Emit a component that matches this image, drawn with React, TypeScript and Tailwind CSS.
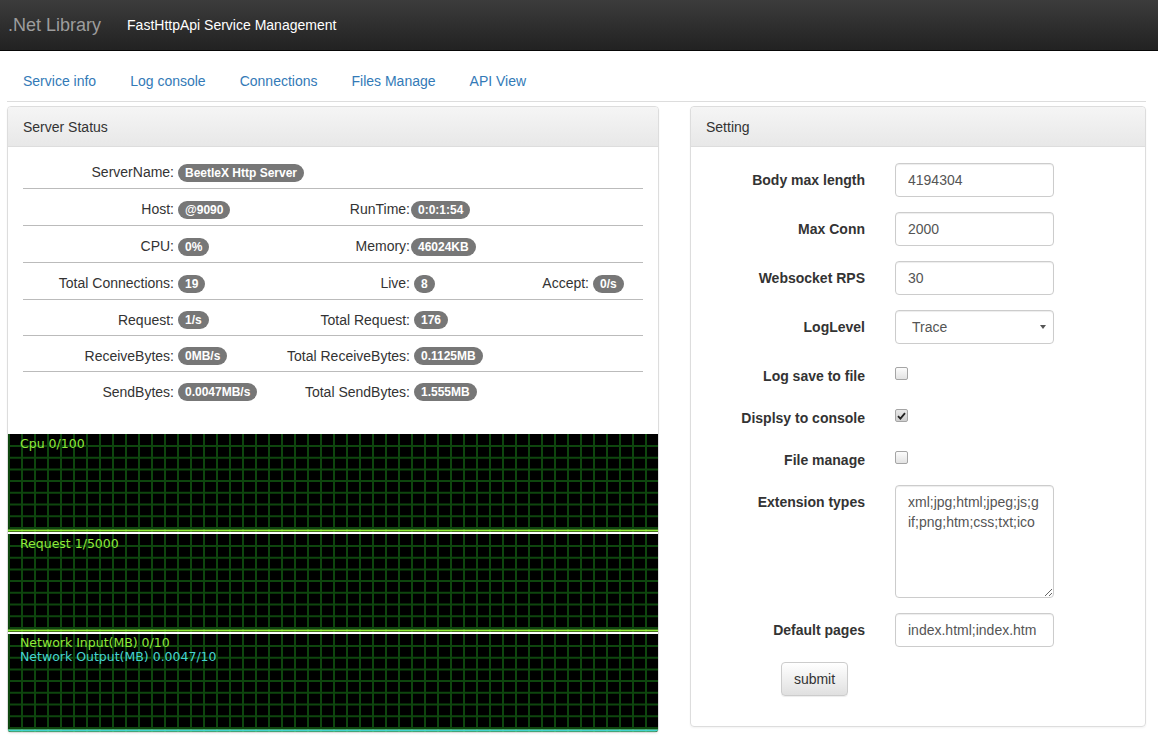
import React from "react";

type Cell = { label: string; value: string; tight?: boolean } | null;

const rows: Cell[][] = [
  [{ label: "ServerName:", value: "BeetleX Http Server" }, null, null],
  [{ label: "Host:", value: "@9090" }, { label: "RunTime:", value: "0:0:1:54", tight: true }, null],
  [{ label: "CPU:", value: "0%" }, { label: "Memory:", value: "46024KB", tight: true }, null],
  [
    { label: "Total Connections:", value: "19" },
    { label: "Live:", value: "8" },
    { label: "Accept:", value: "0/s" },
  ],
  [{ label: "Request:", value: "1/s" }, { label: "Total Request:", value: "176" }, null],
  [{ label: "ReceiveBytes:", value: "0MB/s" }, { label: "Total ReceiveBytes:", value: "0.1125MB" }, null],
  [{ label: "SendBytes:", value: "0.0047MB/s" }, { label: "Total SendBytes:", value: "1.555MB" }, null],
];

const navLinks = ["Service info", "Log console", "Connections", "Files Manage", "API View"];

function Badge({ children }: { children: React.ReactNode }) {
  return (
    <span className="inline-block rounded-[10px] bg-[#777] px-[7px] py-[3px] text-[12px] font-bold leading-[12px] text-white whitespace-nowrap">
      {children}
    </span>
  );
}

function ChartGrid({ lines }: { lines: string[] }) {
  const xs = Array.from({ length: 51 }, (_, i) => 1 + i * 13);
  const ys = Array.from({ length: 8 }, (_, i) => 12 + i * 11.7);
  return (
    <svg className="absolute inset-0 h-full w-full" viewBox="0 0 650 98" preserveAspectRatio="none">
      <rect width="650" height="98" fill="#000" />
      {xs.map((x) => (
        <line key={"x" + x} x1={x} y1="0" x2={x} y2="98" stroke="#0e460e" strokeWidth="2" />
      ))}
      {ys.map((y) => (
        <line key={"y" + y} x1="0" y1={y} x2="650" y2={y} stroke="#0e460e" strokeWidth="2" />
      ))}
      {lines.map((c) => (
        <line key={c} x1="0" y1="96.5" x2="650" y2="96.5" stroke={c} strokeWidth="2" />
      ))}
    </svg>
  );
}

function Chart({ children, lines }: { children: React.ReactNode; lines: string[] }) {
  return (
    <div className="relative h-[98px] overflow-hidden bg-black">
      <ChartGrid lines={lines} />
      <div className="relative pl-[12px] font-['DejaVu_Sans',sans-serif] text-[12.5px] leading-[14px]">
        {children}
      </div>
    </div>
  );
}

function Checkbox({ checked }: { checked?: boolean }) {
  return (
    <div
      className={`mt-[8px] flex h-[13px] w-[13px] items-center justify-center rounded-[2px] border border-[#a5a5a5] ${
        checked ? "bg-gradient-to-b from-[#e8e8e8] to-[#cfcfcf]" : "bg-gradient-to-b from-[#fcfcfc] to-[#e3e3e3]"
      }`}
    >
      {checked && (
        <svg width="9" height="8" viewBox="0 0 9 8">
          <path d="M1 4.2 L3.4 6.6 L8 1.2" fill="none" stroke="#222" strokeWidth="1.8" />
        </svg>
      )}
    </div>
  );
}

function FormRow({ label, children }: { label: string; children: React.ReactNode }) {
  return (
    <div className="mb-[15px] flex items-start">
      <label className="w-[159px] shrink-0 pt-[7px] text-right font-bold leading-[20px] text-[#333]">{label}</label>
      <div className="ml-[30px]">{children}</div>
    </div>
  );
}

const inputCls =
  "h-[34px] w-[159px] rounded-[4px] border border-[#ccc] bg-white px-[12px] text-[14px] text-[#555] shadow-[inset_0_1px_1px_rgba(0,0,0,0.075)] outline-none";

export default function App() {
  return (
    <div className="min-h-screen bg-white font-['Liberation_Sans',Arial,sans-serif] text-[14px] text-[#333]">
      {/* Navbar */}
      <header className="flex h-[51px] items-center border-b border-[#080808] bg-gradient-to-b from-[#3c3c3c] to-[#222]">
        <span className="pl-[8px] text-[18px] text-[#9d9d9d]">.Net Library</span>
        <span className="ml-[26px] text-white">FastHttpApi Service Management</span>
      </header>

      <div className="pl-[7px] pr-[12px]">
        {/* Tabs */}
        <nav className="mt-[10px] flex gap-[4px] border-b border-[#ddd] pl-px">
          {navLinks.map((l) => (
            <a key={l} className="px-[15px] py-[10px] leading-[20px] text-[#337ab7]">
              {l}
            </a>
          ))}
        </nav>

        <div className="mt-[4px] flex items-start gap-[31px]">
          {/* Server status */}
          <section className="w-[652px] overflow-hidden rounded-[4px] border border-[#ddd] shadow-[0_1px_2px_rgba(0,0,0,0.05)]">
            <div className="h-[40px] border-b border-[#ddd] bg-gradient-to-b from-[#f5f5f5] to-[#e8e8e8] px-[15px] leading-[40px]">
              Server Status
            </div>
            <div className="px-[15px] pt-[5px]">
              {rows.map((row, i) => (
                <div
                  key={i}
                  className={`grid grid-cols-[151px_106px_130px_100px_79px_54px] items-center pt-[5px] ${
                    i === 0 ? "h-[36px]" : i < 4 ? "h-[37px] border-t border-[#bbb]" : "h-[36px] border-t border-[#bbb]"
                  }`}
                >
                  {row.map((c, j) => (
                    <React.Fragment key={j}>
                      <div className="whitespace-nowrap text-right">{c?.label}</div>
                      <div className={`flex ${c?.tight ? "pl-[1px]" : "pl-[4px]"}`}>
                        {c && <Badge>{c.value}</Badge>}
                      </div>
                    </React.Fragment>
                  ))}
                </div>
              ))}
            </div>
            <div className="mt-[27px] flex flex-col gap-[2px]">
              <Chart lines={["#8ee83a"]}>
                <div className="pt-[3px] text-[#8ee83a]">Cpu 0/100</div>
              </Chart>
              <Chart lines={["#8ee83a"]}>
                <div className="pt-[3px] text-[#8ee83a]">Request 1/5000</div>
              </Chart>
              <Chart lines={["#8ee83a", "#45d4d0"]}>
                <div className="pt-[2px] text-[#8ee83a]">Network Input(MB) 0/10</div>
                <div className="text-[#45d4d0]">Network Output(MB) 0.0047/10</div>
              </Chart>
            </div>
          </section>

          {/* Setting */}
          <section className="w-[456px] rounded-[4px] border border-[#ddd] shadow-[0_1px_2px_rgba(0,0,0,0.05)]">
            <div className="h-[40px] rounded-t-[4px] border-b border-[#ddd] bg-gradient-to-b from-[#f5f5f5] to-[#e8e8e8] px-[15px] leading-[40px]">
              Setting
            </div>
            <div className="px-[15px] pb-[15px] pt-[16px]">
              <FormRow label="Body max length">
                <input className={inputCls} defaultValue="4194304" readOnly />
              </FormRow>
              <FormRow label="Max Conn">
                <input className={inputCls} defaultValue="2000" readOnly />
              </FormRow>
              <FormRow label="Websocket RPS">
                <input className={inputCls} defaultValue="30" readOnly />
              </FormRow>
              <FormRow label="LogLevel">
                <div className="flex h-[34px] w-[159px] items-center justify-between rounded-[4px] border border-[#ccc] bg-white pl-[16px] pr-[7px] text-[#555] shadow-[inset_0_1px_1px_rgba(0,0,0,0.075)]">
                  <span>Trace</span>
                  <svg width="6" height="4" viewBox="0 0 6 4">
                    <polygon points="0,0 6,0 3,4" fill="#555" />
                  </svg>
                </div>
              </FormRow>
              <FormRow label="Log save to file">
                <Checkbox />
              </FormRow>
              <FormRow label="Displsy to console">
                <Checkbox checked />
              </FormRow>
              <FormRow label="File manage">
                <Checkbox />
              </FormRow>
              <FormRow label="Extension types">
                <textarea
                  className="block h-[113px] w-[159px] rounded-[4px] border border-[#ccc] bg-white px-[12px] py-[6px] text-[14px] leading-[20px] text-[#555] shadow-[inset_0_1px_1px_rgba(0,0,0,0.075)] outline-none"
                  defaultValue="xml;jpg;html;jpeg;js;gif;png;htm;css;txt;ico"
                  readOnly
                />
              </FormRow>
              <FormRow label="Default pages">
                <input className={inputCls} defaultValue="index.html;index.htm" readOnly />
              </FormRow>
              <div className="mb-[15px] pl-[75px]">
                <button className="h-[34px] w-[67px] rounded-[4px] border border-[#ccc] bg-gradient-to-b from-white to-[#e0e0e0] text-[14px] text-[#333] shadow-[0_1px_1px_rgba(0,0,0,0.075)]">
                  submit
                </button>
              </div>
            </div>
          </section>
        </div>
      </div>
    </div>
  );
}
